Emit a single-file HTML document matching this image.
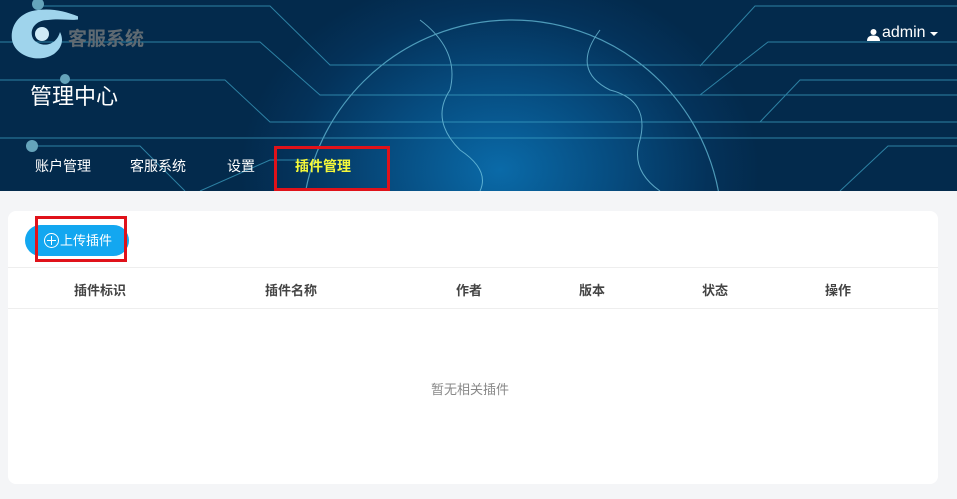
<!DOCTYPE html>
<html><head><meta charset="utf-8"><style>
*{margin:0;padding:0;box-sizing:border-box}
body{width:957px;height:499px;background:#f4f5f7;font-family:"Liberation Sans","Noto Sans CJK SC",sans-serif;position:relative;overflow:hidden}
.hd{position:absolute;left:0;top:0;width:957px;height:191px;background:radial-gradient(ellipse 260px 200px at 500px 170px,#0a6aa8 0%,#064b7e 45%,#04325a 80%,#032a4c 100%);overflow:hidden}
.t{position:absolute;color:#fff;font-size:14px}
.red{position:absolute;border:3px solid #e0121a}
</style></head><body>
<div class="hd">
<svg width="957" height="191" style="position:absolute;left:0;top:0" fill="none" stroke="#3fa6c8" stroke-width="1" opacity="0.7">
<polyline points="0,42 260,42 320,95 957,95"/>
<polyline points="40,6 270,6 330,65 957,65"/>
<polyline points="0,80 225,80 270,122 957,122"/>
<polyline points="0,138 957,138"/>
<polyline points="30,146 140,146 185,191"/>
<polyline points="700,66 755,6 957,6"/>
<polyline points="700,95 768,42 957,42"/>
<polyline points="760,122 800,80 957,80"/>
<polyline points="840,191 888,146 957,146"/>
<polyline points="200,191 270,160 310,160"/>
<circle cx="512" cy="230" r="210" stroke="#6cc6e0" stroke-width="1.2"/>
<path d="M420 20 q40 30 30 70 q-20 30 10 60 q30 20 20 41" stroke="#7fd0e8"/>
<path d="M600 30 q-30 40 10 60 q40 10 30 50 q-10 30 20 51" stroke="#7fd0e8"/>
<circle cx="38" cy="4" r="6" fill="#8fd8ea" stroke="none"/>
<circle cx="32" cy="146" r="6" fill="#8fd8ea" stroke="none"/>
<circle cx="65" cy="79" r="5" fill="#8fd8ea" stroke="none"/>
</svg>
<svg width="70" height="62" style="position:absolute;left:8px;top:2px" viewBox="0 0 70 62"><path d="M30 8 C10 10 2 25 4 38 C7 54 30 62 46 52 C54 46 56 38 52 30 C48 44 34 46 26 38 C20 30 26 18 40 18 C55 16 68 20 74 16 C60 10 46 6 30 8Z" fill="#9fd4ec"/><circle cx="34" cy="32" r="7" fill="#cfeaf6"/></svg>
<div class="t" style="left:68px;top:24px;font-size:19px;font-weight:bold;color:#5f6a72">客服系统</div>
<div class="t" style="left:30px;top:79px;font-size:22px">管理中心</div>
<div class="t" style="left:35px;top:156px">账户管理</div>
<div class="t" style="left:130px;top:156px">客服系统</div>
<div class="t" style="left:227px;top:156px">设置</div>
<div class="t" style="left:295px;top:156px;color:#f4f83a;font-weight:bold">插件管理</div>
<svg width="13" height="13" style="position:absolute;left:867px;top:28px" viewBox="0 0 13 13" fill="#fff"><circle cx="6.5" cy="4" r="3"/><path d="M0 13 Q0 7.5 6.5 7.5 Q13 7.5 13 13Z"/></svg>
<div class="t" style="left:882px;top:24px;font-size:16px">admin</div>
<svg width="8" height="5" style="position:absolute;left:930px;top:32px"><path d="M0 0H8L4 4Z" fill="#fff"/></svg>
</div>
<div class="red" style="left:274px;top:146px;width:116px;height:45px"></div>
<div style="position:absolute;left:8px;top:211px;width:930px;height:273px;background:#fff;border-radius:8px">
<div style="position:absolute;left:17px;top:14px;width:104px;height:31px;background:#13a7f0;border-radius:16px;color:#fff;font-size:13px;line-height:31px;padding-left:19px">
<span style="position:absolute;left:19px;top:8px;width:15px;height:15px;border:1px solid #fff;border-radius:50%"></span><span style="position:absolute;left:22px;top:15px;width:9px;height:1px;background:#fff"></span><span style="position:absolute;left:26px;top:11px;width:1px;height:9px;background:#fff"></span>
<span style="margin-left:16px">上传插件</span></div>
<div style="position:absolute;left:0;top:56px;width:930px;height:1px;background:#eee"></div>
<div style="position:absolute;left:0;top:97px;width:930px;height:1px;background:#eee"></div>
<div style="position:absolute;top:69px;left:0;width:930px;font-size:13px;font-weight:bold;color:#444">
<span style="position:absolute;left:66px">插件标识</span><span style="position:absolute;left:257px">插件名称</span><span style="position:absolute;left:448px">作者</span><span style="position:absolute;left:571px">版本</span><span style="position:absolute;left:694px">状态</span><span style="position:absolute;left:817px">操作</span></div>
<div style="position:absolute;top:168px;left:423px;font-size:13px;color:#888">暂无相关插件</div>
</div>
<div class="red" style="left:35px;top:216px;width:92px;height:46px"></div>
</body></html>
